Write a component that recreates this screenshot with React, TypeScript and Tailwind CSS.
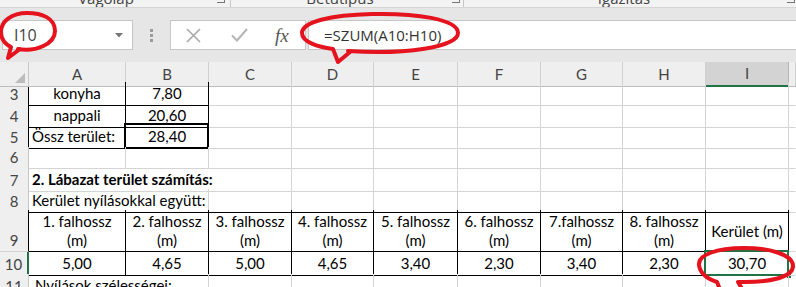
import type { ReactNode } from 'react';

const cols = 'grid grid-cols-[29px_97px_83px_83px_82px_84px_83px_82px_83px_83px_1fr]';

type CellProps = {
  children?: ReactNode;
  r?: string;
  b?: string;
  className?: string;
};

const Cell = ({ children, r = 'border-r-[#d4d4d4]', b = 'border-b-[#d4d4d4]', className = '' }: CellProps) => (
  <div className={`relative border-r border-b ${r} ${b} flex items-center justify-center whitespace-nowrap text-[15px] text-black ${className}`}>
    {children}
  </div>
);

const RowHead = ({ n, r = 'border-r-[#c6c6c6]', className = '' }: { n: string; r?: string; className?: string }) => (
  <div className={`border-r border-b ${r} border-b-[#d4d4d4] bg-[#efefef] flex items-end justify-center text-[15px] leading-[21px] text-[#444] ${className}`}>
    {n}
  </div>
);

const Empty = ({ from = 0, b }: { from?: number; b?: string }) => (
  <>
    {Array.from({ length: 8 - from }).map((_, i) => (
      <Cell key={i} b={b} />
    ))}
    <Cell r="border-r-transparent" />
  </>
);

const headers = [
  { c: 'A', a: false },
  { c: 'B', a: false },
  { c: 'C', a: false },
  { c: 'D', a: false },
  { c: 'E', a: false },
  { c: 'F', a: false },
  { c: 'G', a: false },
  { c: 'H', a: false },
  { c: 'I', a: true },
  { c: '', a: false }
];

const walls = ['1. falhossz', '2. falhossz', '3. falhossz', '4. falhossz', '5. falhossz', '6. falhossz', '7.falhossz', '8. falhossz'];
const values = ['5,00', '4,65', '5,00', '4,65', '3,40', '2,30', '3,40', '2,30'];

export default function App() {
  return (
    <div className="relative w-[796px] h-[287px] overflow-hidden bg-white font-['Lato',sans-serif]">
      {/* ribbon group labels, only their lower edge shows */}
      <div className="h-[8px] overflow-hidden bg-[#f3f3f3] border-b border-[#d5d5d5] flex text-[15px] text-[#444] font-['Open_Sans',sans-serif]">
        <div className="w-[230px] flex">
          <span className="w-[212px] text-center -mt-[13px]">Vágólap</span>
          <span className="ml-[5px] -mt-[6px] w-[8px] h-[9px] border-r border-b border-[#777]" />
        </div>
        <div className="w-[233px] flex border-l border-[#c8c8c8]">
          <span className="w-[218px] text-center -mt-[13px]">Betűtípus</span>
          <span className="ml-[3px] -mt-[6px] w-[8px] h-[9px] border-r border-b border-[#777]" />
        </div>
        <div className="flex-1 flex border-l border-[#c8c8c8]">
          <span className="w-[320px] text-center -mt-[13px]">Igazítás</span>
          <span className="ml-[3px] -mt-[6px] w-[8px] h-[9px] border-r border-b border-[#777]" />
        </div>
      </div>

      {/* formula bar */}
      <div className="h-[54px] bg-[#e6e6e6] flex items-start pt-[12px] font-['Open_Sans',sans-serif]">
        <div className="ml-[2px] w-[131px] h-[30px] bg-white border border-[#c6c6c6] flex items-center justify-between pl-[11px] pr-[9px]">
          <span className="text-[16px] text-[#444]">I10</span>
          <svg width="8" height="5" viewBox="0 0 8 5"><path d="M0 0 L8 0 L4 4.5 Z" fill="#777" /></svg>
        </div>
        <div className="w-[37px] h-[30px] flex flex-col items-center justify-center gap-[2px]">
          <span className="w-[3px] h-[3px] bg-[#9a9a9a]" />
          <span className="w-[3px] h-[3px] bg-[#9a9a9a]" />
          <span className="w-[3px] h-[3px] bg-[#9a9a9a]" />
        </div>
        <div className="w-[136px] h-[30px] bg-white border border-[#c6c6c6] flex items-center">
          <svg className="ml-[15px]" width="15" height="15" viewBox="0 0 15 15">
            <path d="M1 1 L14 14 M14 1 L1 14" stroke="#a8a8a8" strokeWidth="1.6" />
          </svg>
          <svg className="ml-[30px]" width="17" height="14" viewBox="0 0 17 14">
            <path d="M1 7.5 L6 12.5 L16 1" stroke="#b4b4b4" strokeWidth="2" fill="none" />
          </svg>
          <span className="ml-[27px] text-[19px] italic text-[#555] font-['Liberation_Serif',serif] leading-none">fx</span>
        </div>
        <div className="ml-[2px] flex-1 h-[30px] bg-white border-y border-l border-[#c6c6c6] flex items-center pl-[15px]">
          <span className="text-[15px] text-[#333]">=SZUM(A10:H10)</span>
        </div>
      </div>

      {/* column headers */}
      <div className={`${cols} h-[20px]`}>
        <div className="relative bg-[#efefef] border-r border-b border-r-[#c6c6c6] border-b-[#bdbdbd]">
          <svg className="absolute right-[3px] bottom-[3px]" width="10" height="10" viewBox="0 0 10 10">
            <path d="M10 0 L10 10 L0 10 Z" fill="#bcbcbc" />
          </svg>
        </div>
        {headers.map((h) => (
          <div
            key={h.c || 'J'}
            className={`flex items-center justify-center text-[15px] text-[#444] border-r ${h.a ? 'bg-[#d3d3d3] border-b-2 border-b-[#217346] border-r-[#b5b5b5]' : 'bg-[#efefef] border-b border-b-[#bdbdbd] border-r-[#cfcfcf]'}`}
          >
            {h.c}
          </div>
        ))}
      </div>

      {/* row 3 */}
      <div className={`${cols} h-[22px]`}>
        <RowHead n="3" r="border-r-black" />
        <Cell r="border-r-black" b="border-b-black">konyha</Cell>
        <Cell r="border-r-black" b="border-b-black">7,80</Cell>
        <Empty from={1} />
      </div>

      {/* row 4 */}
      <div className={`${cols} h-[21px]`}>
        <RowHead n="4" r="border-r-black" />
        <Cell r="border-r-black" b="border-b-black">nappali</Cell>
        <Cell r="border-r-black" b="border-b-black">20,60</Cell>
        <Empty from={1} />
      </div>

      {/* row 5 */}
      <div className={`${cols} h-[22px]`}>
        <RowHead n="5" r="border-r-black" />
        <Cell r="border-r-black" b="border-b-black" className="justify-start pl-[3px]">Össz terület:</Cell>
        <Cell r="border-r-black" b="border-b-black">
          <span className="absolute -top-[2px] -left-[2px] -right-[1px] -bottom-[1px] border-2 border-black" />
          28,40
        </Cell>
        <Empty from={1} />
      </div>

      {/* row 6 */}
      <div className={`${cols} h-[21px]`}>
        <RowHead n="6" />
        <Empty from={-1} />
      </div>

      {/* row 7 */}
      <div className={`${cols} h-[21px]`}>
        <RowHead n="7" />
        <Cell className="col-span-3 justify-start pl-[3px] font-bold">2. Lábazat terület számítás:</Cell>
        <Empty from={2} />
      </div>

      {/* row 8 */}
      <div className={`${cols} h-[21px]`}>
        <RowHead n="8" />
        <Cell b="border-b-black" className="col-span-2 justify-start pl-[3px]">Kerület nyílásokkal együtt:</Cell>
        <Empty from={1} b="border-b-black" />
      </div>

      {/* row 9 */}
      <div className={`${cols} h-[42px]`}>
        <RowHead n="9" r="border-r-black" />
        {walls.map((w) => (
          <Cell key={w} r="border-r-black" b="border-b-black" className="flex-col leading-[19px] pt-[1px]">
            <span>{w}</span>
            <span>(m)</span>
          </Cell>
        ))}
        <Cell r="border-r-black" b="border-b-black" className="pt-[1px]">Kerület (m)</Cell>
        <Cell r="border-r-transparent" />
      </div>

      {/* row 10 */}
      <div className={`${cols} h-[22px]`}>
        <RowHead n="10" r="border-r-[#217346]" className="bg-[#d3d3d3] border-r-2" />
        {values.map((v, i) => (
          <Cell key={i} r="border-r-black" b="border-b-black">{v}</Cell>
        ))}
        <Cell r="border-r-black" b="border-b-black">
          <span className="absolute -top-[2px] -left-[2px] -right-[1px] -bottom-[1px] border-2 border-[#217346]" />
          <span className="absolute -right-[4px] -bottom-[4px] w-[6px] h-[6px] bg-[#217346] border border-white" />
          30,70
        </Cell>
        <Cell r="border-r-transparent" />
      </div>

      {/* row 11 */}
      <div className={`${cols} h-[22px]`}>
        <RowHead n="11" />
        <Cell className="col-span-2 justify-start pl-[6px]">Nyílások szélességei:</Cell>
        <Empty from={1} />
      </div>

      {/* red hand-drawn marks */}
      <svg className="absolute inset-0 pointer-events-none" width="796" height="287" viewBox="0 0 796 287">
        <g stroke="#e5131d" strokeWidth="4" fill="none" strokeLinecap="round" strokeLinejoin="round">
          <path d="M18 49 C36 52 55 44 55 31 C55 18 42 13 27 13 C12 13 1 21 1 32 C1 41 7 45 11 47 L8 58 L20 49" />
          <path d="M348 51 C405 55 458 47 458 33 C458 19 415 13 372 14 C330 15 302 22 302 33 C302 42 318 47 333 49 L338 62 L350 52" />
          <path d="M738 282 C770 283 793 277 793 266 C793 254 768 248 744 248 C716 248 698 255 699 265 C700 274 708 279 717 282 L721 292 M738 282 L744 292" />
        </g>
      </svg>
    </div>
  );
}
